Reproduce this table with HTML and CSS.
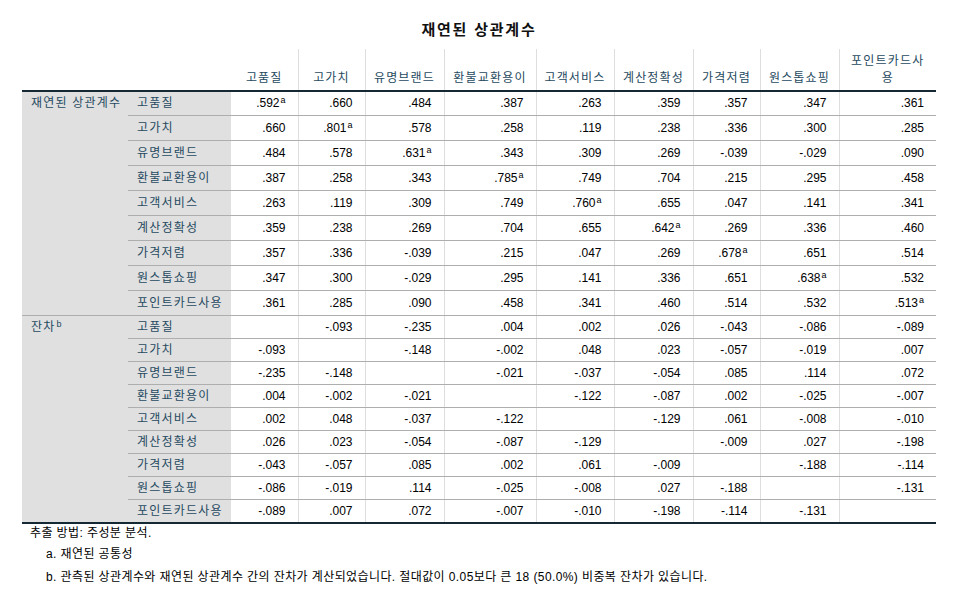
FILE: index.html
```html
<!DOCTYPE html>
<html lang="ko">
<head>
<meta charset="utf-8">
<title>재연된 상관계수</title>
<link rel="stylesheet" href="styles.css">
</head>
<body>
<div class="page">
  <div class="title">재연된 상관계수</div>
  <table class="corr">
    <colgroup>
      <col class="c-grp"><col class="c-var">
      <col class="c67"><col class="c67"><col class="c79"><col class="c92"><col class="c78"><col class="c79"><col class="c67"><col class="c79"><col class="c97">
    </colgroup>
    <thead>
      <tr>
        <th class="blank"></th><th class="blank"></th>
        <th>고품질</th><th>고가치</th><th>유명브랜드</th><th>환불교환용이</th><th>고객서비스</th><th>계산정확성</th><th>가격저렴</th><th>원스톱쇼핑</th><th class="narrow">포인트카드사용</th>
      </tr>
    </thead>
    <tbody class="g1">
      <tr class="first"><th class="grp" rowspan="9">재연된 상관계수</th><th class="var">고품질</th><td>.592<sup>a</sup></td><td>.660</td><td>.484</td><td>.387</td><td>.263</td><td>.359</td><td>.357</td><td>.347</td><td>.361</td></tr>
      <tr><th class="var">고가치</th><td>.660</td><td>.801<sup>a</sup></td><td>.578</td><td>.258</td><td>.119</td><td>.238</td><td>.336</td><td>.300</td><td>.285</td></tr>
      <tr><th class="var">유명브랜드</th><td>.484</td><td>.578</td><td>.631<sup>a</sup></td><td>.343</td><td>.309</td><td>.269</td><td>-.039</td><td>-.029</td><td>.090</td></tr>
      <tr><th class="var">환불교환용이</th><td>.387</td><td>.258</td><td>.343</td><td>.785<sup>a</sup></td><td>.749</td><td>.704</td><td>.215</td><td>.295</td><td>.458</td></tr>
      <tr><th class="var">고객서비스</th><td>.263</td><td>.119</td><td>.309</td><td>.749</td><td>.760<sup>a</sup></td><td>.655</td><td>.047</td><td>.141</td><td>.341</td></tr>
      <tr><th class="var">계산정확성</th><td>.359</td><td>.238</td><td>.269</td><td>.704</td><td>.655</td><td>.642<sup>a</sup></td><td>.269</td><td>.336</td><td>.460</td></tr>
      <tr><th class="var">가격저렴</th><td>.357</td><td>.336</td><td>-.039</td><td>.215</td><td>.047</td><td>.269</td><td>.678<sup>a</sup></td><td>.651</td><td>.514</td></tr>
      <tr><th class="var">원스톱쇼핑</th><td>.347</td><td>.300</td><td>-.029</td><td>.295</td><td>.141</td><td>.336</td><td>.651</td><td>.638<sup>a</sup></td><td>.532</td></tr>
      <tr><th class="var">포인트카드사용</th><td>.361</td><td>.285</td><td>.090</td><td>.458</td><td>.341</td><td>.460</td><td>.514</td><td>.532</td><td>.513<sup>a</sup></td></tr>
    </tbody>
    <tbody class="g2">
      <tr><th class="grp" rowspan="9">잔차<sup>b</sup></th><th class="var">고품질</th><td></td><td>-.093</td><td>-.235</td><td>.004</td><td>.002</td><td>.026</td><td>-.043</td><td>-.086</td><td>-.089</td></tr>
      <tr><th class="var">고가치</th><td>-.093</td><td></td><td>-.148</td><td>-.002</td><td>.048</td><td>.023</td><td>-.057</td><td>-.019</td><td>.007</td></tr>
      <tr><th class="var">유명브랜드</th><td>-.235</td><td>-.148</td><td></td><td>-.021</td><td>-.037</td><td>-.054</td><td>.085</td><td>.114</td><td>.072</td></tr>
      <tr><th class="var">환불교환용이</th><td>.004</td><td>-.002</td><td>-.021</td><td></td><td>-.122</td><td>-.087</td><td>.002</td><td>-.025</td><td>-.007</td></tr>
      <tr><th class="var">고객서비스</th><td>.002</td><td>.048</td><td>-.037</td><td>-.122</td><td></td><td>-.129</td><td>.061</td><td>-.008</td><td>-.010</td></tr>
      <tr><th class="var">계산정확성</th><td>.026</td><td>.023</td><td>-.054</td><td>-.087</td><td>-.129</td><td></td><td>-.009</td><td>.027</td><td>-.198</td></tr>
      <tr><th class="var">가격저렴</th><td>-.043</td><td>-.057</td><td>.085</td><td>.002</td><td>.061</td><td>-.009</td><td></td><td>-.188</td><td>-.114</td></tr>
      <tr><th class="var">원스톱쇼핑</th><td>-.086</td><td>-.019</td><td>.114</td><td>-.025</td><td>-.008</td><td>.027</td><td>-.188</td><td></td><td>-.131</td></tr>
      <tr class="last"><th class="var">포인트카드사용</th><td>-.089</td><td>.007</td><td>.072</td><td>-.007</td><td>-.010</td><td>-.198</td><td>-.114</td><td>-.131</td><td></td></tr>
    </tbody>
  </table>
  <div class="notes">
    <p class="method">추출 방법: 주성분 분석.</p>
    <p class="fn">a. 재연된 공통성</p>
    <p class="fn">b. 관측된 상관계수와 재연된 상관계수 간의 잔차가 계산되었습니다. 절대값이 0.05보다 큰 18 (50.0%) 비중복 잔차가 있습니다.</p>
  </div>
</div>
</body>
</html>
```
FILE: styles.css
```css
html, body {
  margin: 0;
  padding: 0;
  background: #ffffff;
}

body {
  font-family: "Liberation Sans", "Noto Sans CJK KR", sans-serif;
  font-size: 12px;
  color: #000000;
}

.page {
  padding: 20px 0 0 22px;
  width: 914px;
}

.title {
  height: 29px;
  line-height: 20px;
  text-align: center;
  font-size: 15px;
  font-weight: bold;
  letter-spacing: 1.8px;
  color: #111111;
}

.corr {
  border-collapse: collapse;
  table-layout: fixed;
  width: 914px;
}

.c-grp { width: 106px; }
.c-var { width: 103px; }
.c67 { width: 67px; }
.c78 { width: 78px; }
.c79 { width: 79px; }
.c92 { width: 92px; }
.c97 { width: 97px; }

.corr thead th {
  height: 38px;
  padding: 0 2px 3px;
  vertical-align: bottom;
  text-align: center;
  font-weight: normal;
  color: #264a60;
  line-height: 17px;
  letter-spacing: 1.2px;
  border-right: 1px solid #dedede;
  border-bottom: 2px solid #152935;
}

.corr thead th.narrow {
  padding: 0 8px 3px;
}

.corr thead th.blank,
.corr thead th:last-child {
  border-right: none;
}

.corr td {
  text-align: right;
  padding: 0 12px 0 0;
  line-height: 24px;
  border-bottom: 1px solid #aeaeae;
  border-right: 1px solid #dedede;
  white-space: nowrap;
}

.corr td:last-child {
  border-right: none;
}

.corr .var,
.corr .grp {
  background: #e0e0e0;
  color: #264a60;
  font-weight: normal;
  text-align: left;
  padding: 0 0 0 9px;
  white-space: nowrap;
  letter-spacing: 1.2px;
  border-bottom: 1px solid #aeaeae;
}

.corr .var {
  line-height: 24px;
}

.corr .grp {
  vertical-align: top;
  line-height: 24px;
}

.corr .g1 tr.first td,
.corr .g1 tr.first .var {
  line-height: 23px;
}

.corr .g1 .grp {
  line-height: 23px;
}

.corr .g2 td,
.corr .g2 .var,
.corr .g2 .grp {
  line-height: 22px;
}

.corr .g2 tr.last td,
.corr .g2 tr.last .var,
.corr .g2 .grp {
  border-bottom: 2px solid #152935;
}

.corr sup {
  font-size: 9px;
  line-height: 0;
  vertical-align: 4px;
  margin-left: 1px;
  letter-spacing: 0;
}

.notes {
  padding-top: 0;
}

.notes p {
  margin: 0;
  line-height: 18px;
  letter-spacing: 0.4px;
}

.notes .method {
  padding-left: 8px;
}

.notes .fn {
  padding-left: 24px;
  margin-top: 3px;
}

.notes .fn + .fn {
  margin-top: 5px;
}
```
